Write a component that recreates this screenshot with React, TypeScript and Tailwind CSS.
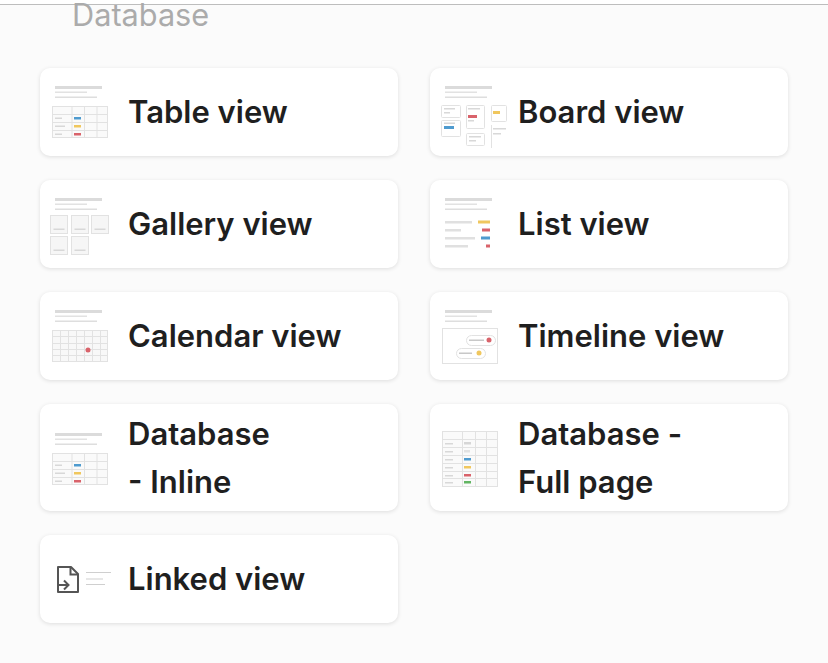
import React from "react";
import clsx from "clsx";

const LINE = "#e2e2e2";
const TEXT = "#d8d8d8";
const BLUE = "#4f9bcf";
const YELLOW = "#f0c75e";
const RED = "#d9636b";
const GREEN = "#62b563";

const Thumb: React.FC<{ children: React.ReactNode }> = ({ children }) => (
  <svg width="58" height="57" viewBox="0 0 58 57" className="mt-[2px] shrink-0 overflow-visible" fill="none">
    {children}
  </svg>
);

const Heading = () => (
  <>
    <rect x="3" y="2" width="47" height="3" fill="#dbdbdb" />
    <rect x="3" y="7.5" width="32" height="1.5" fill="#e2e2e2" />
    <rect x="3" y="12.5" width="42" height="1.5" fill="#dedede" />
  </>
);

const TableGrid = () => (
  <>
    <rect x="0.5" y="22.5" width="55" height="31" fill="#fafafa" stroke={LINE} />
    <path d="M20 22v32M32.5 22v32M45 22v32M0 30.5h56M0 38.5h56M0 46.5h56" stroke={LINE} />
    <rect x="3" y="33.5" width="7" height="1.5" fill={TEXT} />
    <rect x="3" y="41.5" width="10" height="1.5" fill={TEXT} />
    <rect x="3" y="49.5" width="7" height="1.5" fill={TEXT} />
    <rect x="22" y="33" width="7" height="2.5" fill={BLUE} />
    <rect x="22" y="41" width="7" height="2.5" fill={YELLOW} />
    <rect x="22" y="49" width="7" height="2.5" fill={RED} />
  </>
);

const TableIcon = () => (
  <Thumb>
    <Heading />
    <TableGrid />
  </Thumb>
);

const BoardIcon = () => (
  <Thumb>
    <Heading />
    <rect x="-0.5" y="21.5" width="19" height="12" rx="1" fill="#fff" stroke={LINE} />
    <rect x="2" y="24" width="11" height="1.5" fill={TEXT} />
    <rect x="2" y="28" width="6" height="1.5" fill={TEXT} />
    <rect x="-0.5" y="36.5" width="19" height="16" rx="1" fill="#fff" stroke={LINE} />
    <rect x="2" y="38.5" width="11" height="1.5" fill={TEXT} />
    <rect x="2" y="42" width="10" height="3" fill={BLUE} />
    <rect x="24.5" y="21.5" width="18" height="23" rx="1" fill="#fff" stroke={LINE} />
    <rect x="26" y="24" width="12" height="1.5" fill={TEXT} />
    <rect x="26" y="31" width="9" height="3" fill={RED} />
    <rect x="26" y="36" width="6" height="1.5" fill={TEXT} />
    <rect x="24.5" y="49.5" width="18" height="12" rx="1" fill="#fff" stroke={LINE} />
    <rect x="27" y="52" width="12" height="1.5" fill={TEXT} />
    <rect x="27" y="56" width="7" height="1.5" fill={TEXT} />
    <rect x="49.5" y="21.5" width="15" height="16" rx="1" fill="#fff" stroke={LINE} />
    <rect x="51" y="27" width="7" height="3" fill={YELLOW} />
    <path d="M49.5 41v23" stroke={LINE} />
    <rect x="51" y="44" width="13" height="1.5" fill={TEXT} />
    <rect x="51" y="49" width="8" height="1.5" fill={TEXT} />
  </Thumb>
);

const GalleryIcon = () => (
  <Thumb>
    <Heading />
    {[
      [-1.5, 19.5],
      [19.5, 19.5],
      [39.5, 19.5],
      [-1.5, 40.5],
      [19.5, 40.5],
    ].map(([x, y]) => (
      <g key={`${x}-${y}`}>
        <rect x={x} y={y} width="17" height="18" fill="#f6f6f6" stroke={LINE} />
        <rect x={x + 3} y={y + 13} width="11" height="1.5" fill={TEXT} />
      </g>
    ))}
  </Thumb>
);

const ListIcon = () => (
  <Thumb>
    <Heading />
    <rect x="3" y="25" width="27" height="2.5" fill="#e0e0e0" />
    <rect x="36" y="24.5" width="12" height="3" fill={YELLOW} />
    <rect x="3" y="33" width="16" height="2.5" fill="#e0e0e0" />
    <rect x="40" y="32.5" width="8" height="3" fill={RED} />
    <rect x="3" y="41" width="30" height="2.5" fill="#e0e0e0" />
    <rect x="39" y="40.5" width="9" height="3" fill={BLUE} />
    <rect x="3" y="49" width="23" height="2.5" fill="#e0e0e0" />
    <rect x="44" y="48.5" width="4" height="3" fill={RED} />
  </Thumb>
);

const CalendarIcon = () => (
  <Thumb>
    <Heading />
    <rect x="0.5" y="22.5" width="55" height="31" fill="#f8f8f8" stroke={LINE} />
    <path
      d="M8.5 22v32M16.5 22v32M24.5 22v32M32.5 22v32M40.5 22v32M48.5 22v32M0 28.5h56M0 35.5h56M0 41.5h56M0 47.5h56"
      stroke={LINE}
    />
    <circle cx="36" cy="42" r="2.5" fill={RED} />
  </Thumb>
);

const TimelineIcon = () => (
  <Thumb>
    <Heading />
    <rect x="0.5" y="20.5" width="55" height="35" fill="#fff" stroke={LINE} />
    <rect x="24.5" y="27.5" width="29" height="10" rx="5" fill="#fff" stroke={LINE} />
    <rect x="27" y="31.5" width="15" height="1.5" fill="#c8c8c8" />
    <circle cx="47" cy="32" r="2.5" fill={RED} />
    <rect x="14.5" y="40.5" width="29" height="10" rx="5" fill="#fff" stroke={LINE} />
    <rect x="17" y="44.5" width="13" height="1.5" fill="#c8c8c8" />
    <circle cx="37" cy="45" r="2.5" fill={YELLOW} />
  </Thumb>
);

const FullPageIcon = () => (
  <Thumb>
    <rect x="0.5" y="0.5" width="55" height="55" fill="#fafafa" stroke={LINE} />
    <path d="M20.5 0v56M33.5 0v56M44.5 0v56M0 8.5h56M0 16.5h56M0 24.5h56M0 32.5h56M0 40.5h56M0 47.5h56" stroke={LINE} />
    {[12, 20, 28, 36, 44, 51].map((y) => (
      <rect key={y} x="3" y={y} width="8" height="1.5" fill={TEXT} />
    ))}
    <rect x="22" y="11" width="7" height="2.5" fill="#d6d6d6" />
    <rect x="22" y="19" width="6" height="2.5" fill="#e2e2e2" />
    <rect x="22" y="27" width="7" height="2.5" fill={BLUE} />
    <rect x="22" y="35" width="7" height="2.5" fill={YELLOW} />
    <rect x="22" y="43" width="7" height="2.5" fill={RED} />
    <rect x="22" y="50" width="7" height="2.5" fill={GREEN} />
  </Thumb>
);

const LinkedIcon = () => (
  <Thumb>
    <path d="M6 41V16h13l7 7v18H6Z" stroke="#555" strokeWidth="2" strokeLinejoin="round" />
    <path d="M18.5 16v7.5H26" stroke="#555" strokeWidth="2" />
    <path d="M5 34h11M12 29.5l4.5 4.5-4.5 4.5" stroke="#555" strokeWidth="2" />
    <rect x="34" y="21" width="25" height="1" fill="#cfcfcf" />
    <rect x="34" y="27.5" width="17" height="1" fill="#cfcfcf" />
    <rect x="34" y="33" width="19" height="1" fill="#cfcfcf" />
  </Thumb>
);

const items: { label: React.ReactNode; icon: React.ReactNode; tall?: boolean }[] = [
  { label: "Table view", icon: <TableIcon /> },
  { label: "Board view", icon: <BoardIcon /> },
  { label: "Gallery view", icon: <GalleryIcon /> },
  { label: "List view", icon: <ListIcon /> },
  { label: "Calendar view", icon: <CalendarIcon /> },
  { label: "Timeline view", icon: <TimelineIcon /> },
  {
    label: (
      <>
        Database
        <br />- Inline
      </>
    ),
    icon: <TableIcon />,
    tall: true,
  },
  {
    label: (
      <>
        Database -
        <br />
        Full page
      </>
    ),
    icon: <FullPageIcon />,
    tall: true,
  },
  { label: "Linked view", icon: <LinkedIcon /> },
];

export default function App() {
  return (
    <div className="min-h-screen overflow-hidden bg-[#fbfbfb] font-['Inter',sans-serif]">
      <div className="h-1 bg-white" />
      <div className="h-16 border-t border-[#bdbdbd] pl-[72px]">
        <div className="text-[30.7px] leading-[20px] text-[#ababab]">Database</div>
      </div>
      <div className="grid grid-cols-2 gap-x-8 gap-y-6 px-10">
        {items.map((item, i) => (
          <div
            key={i}
            className={clsx(
              "flex min-h-[88px] items-center gap-[18px] rounded-[10px] bg-white pl-3 pr-3 shadow-[0_1px_4px_rgba(0,0,0,0.12)]",
              item.tall ? "pb-[5px] pt-[6px]" : "pb-[6px] pt-[5px]"
            )}
          >
            {item.icon}
            <div className="text-[31px] font-semibold leading-[48px] text-[#1f1f1f]">{item.label}</div>
          </div>
        ))}
      </div>
    </div>
  );
}
